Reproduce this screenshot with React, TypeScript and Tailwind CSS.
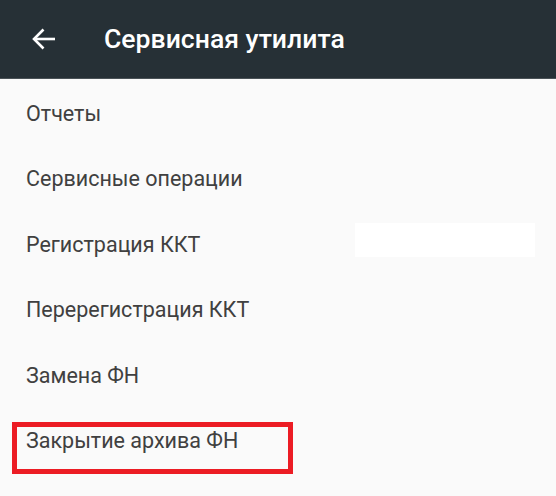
import React from 'react';

const items = [
  'Отчеты',
  'Сервисные операции',
  'Регистрация ККТ',
  'Перерегистрация ККТ',
  'Замена ФН',
  'Закрытие архива ФН',
];

export default function App() {
  return (
    <div className="relative w-[556px] h-[496px] overflow-hidden bg-[#fafafa] font-['Roboto',sans-serif]">
      <header className="h-[79px] bg-[#263036] flex items-center border-b border-[#4a5257]">
        <svg width="26" height="24" viewBox="0 0 26 24" className="ml-[31px]" fill="none" stroke="#ffffff" strokeWidth="2.6">
          <path d="M24 12H3" />
          <path d="M12.5 2.5L3 12l9.5 9.5" />
        </svg>
        <h1 className="ml-[47px] text-white text-[26.6px] font-medium">Сервисная утилита</h1>
      </header>

      <ul className="pt-[2px]">
        {items.map((item) => (
          <li key={item} className="h-[65.5px] flex items-center pl-[26px] text-[21.5px] text-[#404040]">
            {item}
          </li>
        ))}
      </ul>

      {/* white patch over the third row */}
      <div className="absolute left-[355px] top-[223px] w-[180px] h-[34px] bg-white" />

      {/* red highlight frame */}
      <div className="absolute left-[12px] top-[422px] w-[281px] h-[52px] border-[5px] border-[#ec1c24]" />
    </div>
  );
}
